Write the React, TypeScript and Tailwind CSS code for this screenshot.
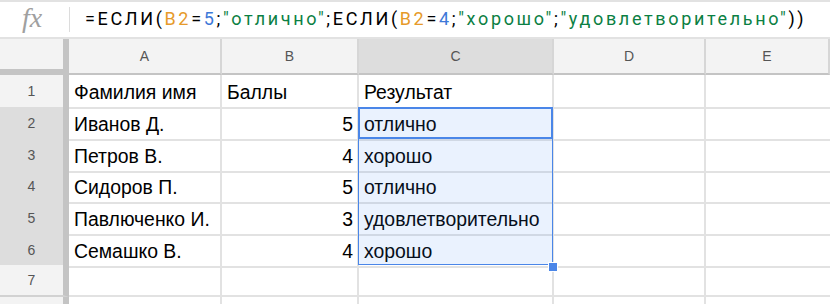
import React from "react";

const colWidths = "grid-cols-[69px_153px_137px_195px_152px_1fr]";

const rows: { n: string; a: string; b: string; c: string; h: string }[] = [
  { n: "1", a: "Фамилия имя", b: "Баллы", c: "Результат", h: "h-[32px]" },
  { n: "2", a: "Иванов Д.", b: "5", c: "отлично", h: "h-[32px]" },
  { n: "3", a: "Петров В.", b: "4", c: "хорошо", h: "h-[31px]" },
  { n: "4", a: "Сидоров П.", b: "5", c: "отлично", h: "h-[32px]" },
  { n: "5", a: "Павлюченко И.", b: "3", c: "удовлетворительно", h: "h-[32px]" },
  { n: "6", a: "Семашко В.", b: "4", c: "хорошо", h: "h-[31px]" },
  { n: "7", a: "", b: "", c: "", h: "h-[32px]" },
  { n: "", a: "", b: "", c: "", h: "h-[32px]" },
];

export default function App() {
  const font = { fontFamily: '"Liberation Sans", Arial, sans-serif' };
  return (
    <div className="w-[830px] h-[304px] overflow-hidden bg-white relative" style={font}>
      {/* formula bar */}
      <div className="h-[39px] flex items-center border-t-2 border-b-2 border-[#e2e2e2]">
        <div className="w-[69px] h-full flex items-center">
          <span
            className="ml-[22px] text-[28px] italic text-[#a0a0a0] leading-none -mt-[3px]"
            style={{ fontFamily: '"Liberation Serif", "Times New Roman", serif' }}
          >
            fx
          </span>
        </div>
        <div className="w-px h-[25px] bg-[#dcdcdc]" />
        <div
          className="ml-[15px] text-[18px] tracking-[2.65px] text-black whitespace-nowrap -mt-[2px]"
          style={{ fontFamily: 'Roboto, "Noto Sans", sans-serif' }}
        >
          =ЕСЛИ(<span className="text-[#e69a2a]">B2</span>=<span className="text-[#3d78d8]">5</span>;
          <span className="text-[#0b8043]">"отлично"</span>;ЕСЛИ(
          <span className="text-[#e69a2a]">B2</span>=<span className="text-[#3d78d8]">4</span>;
          <span className="text-[#0b8043]">"хорошо"</span>;
          <span className="text-[#0b8043]">"удовлетворительно"</span>))
        </div>
      </div>

      {/* column headers */}
      <div className={`grid ${colWidths} h-[36px]`}>
        <div className="bg-[#f3f3f3] border-r-[6px] border-b-[6px] border-[#c4c4c4]" />
        {["A", "B", "C", "D", "E"].map((c) => (
          <div
            key={c}
            className={`flex items-center justify-center text-[14px] text-[#555] border-b-2 border-r-2 border-r-[#d6d6d6] border-b-[#c4c4c4] ${
              c === "C" ? "bg-[#dddddd]" : "bg-[#f3f3f3]"
            }`}
          >
            {c}
          </div>
        ))}
      </div>

      {/* body */}
      {rows.map((r, i) => {
        const sel = ["2", "3", "4", "5", "6"].includes(r.n);
        return (
          <div key={i} className={`grid ${colWidths} ${r.h}`}>
            <div
              className={`flex items-center justify-center text-[14px] text-[#555] border-b-2 border-b-[#d2d2d2] border-r-[6px] border-r-[#c4c4c4] ${
                sel ? "bg-[#dddddd]" : "bg-[#f3f3f3]"
              }`}
            >
              {r.n}
            </div>
            <div className="flex items-center pl-[5px] pt-[3px] text-[19.4px] text-black border-b-2 border-r-2 border-[#e2e2e2] whitespace-nowrap overflow-hidden">
              {r.a}
            </div>
            <div
              className={`flex items-center pt-[3px] text-[19.4px] text-black border-b-2 border-r-2 border-[#e2e2e2] whitespace-nowrap ${
                r.n === "1" ? "pl-[5px]" : "justify-end pr-[4px]"
              }`}
            >
              {r.b}
            </div>
            <div className="flex items-center pl-[5px] pt-[3px] text-[19.4px] text-black border-b-2 border-r-2 border-[#e2e2e2] whitespace-nowrap">
              {r.c}
            </div>
            <div className="border-b-2 border-r-2 border-[#e2e2e2]" />
            <div className="border-b-2 border-[#e2e2e2]" />
          </div>
        );
      })}

      {/* selection overlay */}
      <div className="absolute left-[358px] top-[107px] w-[195px] h-[158px] border border-[#4a86e8] bg-[rgba(66,133,244,0.11)] pointer-events-none" />
      <div className="absolute left-[358px] top-[107px] w-[195px] h-[32px] border-2 border-[#4a86e8] pointer-events-none" />
      <div className="absolute left-[548px] top-[262px] w-[8px] h-[8px] bg-[#4a86e8] border border-white box-content pointer-events-none" />
    </div>
  );
}
